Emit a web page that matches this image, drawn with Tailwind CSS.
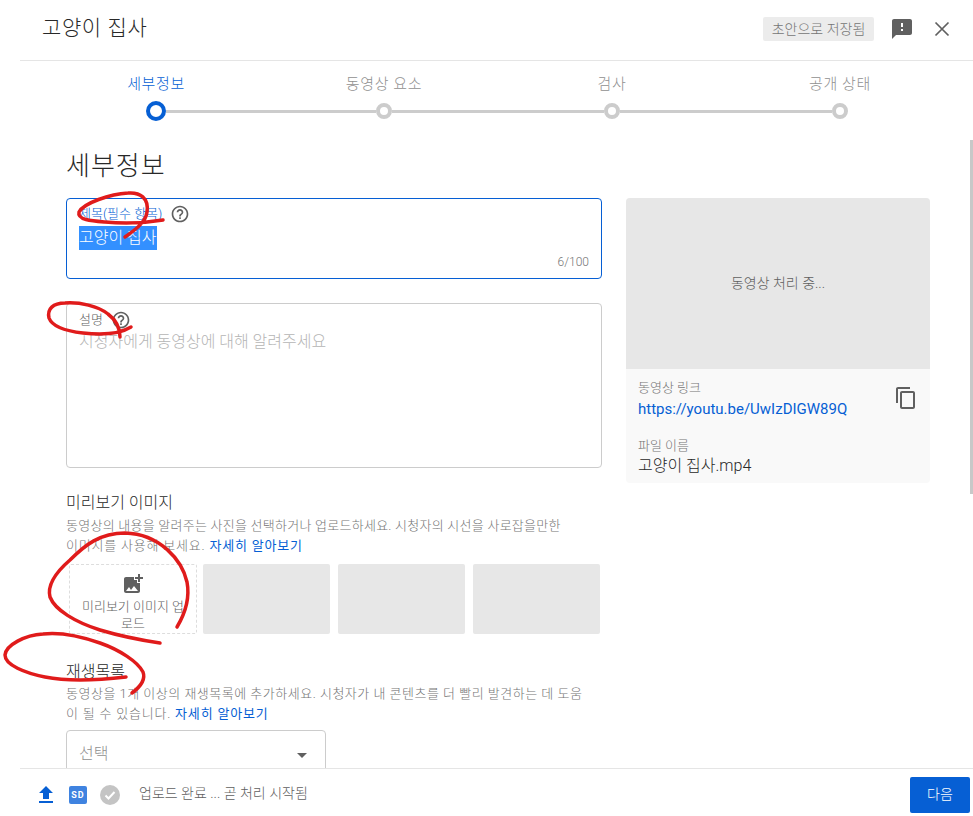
<!DOCTYPE html>
<html lang="ko">
<head>
<meta charset="utf-8">
<script src="https://cdn.jsdelivr.net/npm/@tailwindcss/browser@4"></script>
</head>
<body class="bg-white">
<div class="relative w-[973px] h-[816px] overflow-hidden flex flex-col bg-white text-[#282828] font-light font-['Roboto','Noto_Sans_CJK_KR',sans-serif]">
  <header class="ml-5 h-[61px] shrink-0 border-b border-[#e5e5e5] flex items-center pl-[22px] pr-[19px]">
    <h1 class="flex-1 text-[21px] tracking-[0.600px] leading-[28px] mt-[-4px] font-light">고양이 집사</h1>
    <span class="mt-[-3px] h-[24px] w-[111px] rounded-[2px] bg-[#ececec] text-[#757575] text-[14px] leading-[24px] text-center">초안으로 저장됨</span>
    <svg class="ml-[16px] mt-[-3px] w-[24px] h-[24px]" viewBox="0 0 24 24" fill="#606060"><path d="M20 2H4c-1.100 0-2 .9-2 2v18l4-4h14c1.100 0 2-.9 2-2V4c0-1.100-.9-2-2-2zm-7 12h-2v-2h2v2zm0-4h-2V6h2v4z"/></svg>
    <svg class="ml-[16px] mt-[-3px] w-[24px] h-[24px]" viewBox="0 0 24 24" fill="none" stroke="#606060" stroke-width="1.700"><path d="M5.500 5.500l13 13M18.500 5.500l-13 13"/></svg>
  </header>

  <nav class="ml-[42px] w-[912px] h-[60px] shrink-0 grid grid-cols-4 text-[15px] tracking-[0.600px] text-[#909090] text-center">
    <div class="flex flex-col">
      <span class="h-[40px] leading-[46px] text-[#065fd4]">세부정보</span>
      <div class="flex items-center h-[20px]"><span class="flex-1"></span><span class="w-[20px] h-[20px] rounded-full border-[4px] border-[#065fd4] bg-white"></span><span class="flex-1 h-[3px] bg-[#ccc]"></span></div>
    </div>
    <div class="flex flex-col">
      <span class="h-[40px] leading-[46px]">동영상 요소</span>
      <div class="flex items-center h-[20px]"><span class="flex-1 h-[3px] bg-[#ccc]"></span><span class="w-[16px] h-[16px] rounded-full border-[4px] border-[#ccc] bg-white"></span><span class="flex-1 h-[3px] bg-[#ccc]"></span></div>
    </div>
    <div class="flex flex-col">
      <span class="h-[40px] leading-[46px]">검사</span>
      <div class="flex items-center h-[20px]"><span class="flex-1 h-[3px] bg-[#ccc]"></span><span class="w-[16px] h-[16px] rounded-full border-[4px] border-[#ccc] bg-white"></span><span class="flex-1 h-[3px] bg-[#ccc]"></span></div>
    </div>
    <div class="flex flex-col">
      <span class="h-[40px] leading-[46px]">공개 상태</span>
      <div class="flex items-center h-[20px]"><span class="flex-1 h-[3px] bg-[#ccc]"></span><span class="w-[16px] h-[16px] rounded-full border-[4px] border-[#ccc] bg-white"></span><span class="flex-1"></span></div>
    </div>
  </nav>

  <main class="flex-1 min-h-0 overflow-hidden pl-[66px]">
    <h2 class="mt-[29px] h-[48px] text-[26px] tracking-[1px] leading-[32px] font-light">세부정보</h2>
    <div class="flex gap-6">
      <div class="w-[536px] shrink-0">
        <div class="h-[81px] rounded-[4px] border border-[#065fd4] px-[12px] pt-[5px]">
          <div class="flex items-center h-[20px] gap-[8px]">
            <span class="text-[13px] text-[#065fd4]">제목(필수 항목)</span>
            <svg class="w-[20px] h-[20px]" viewBox="0 0 24 24" fill="#606060"><path d="M11 18h2v-2h-2v2zm1-16C6.480 2 2 6.480 2 12s4.480 10 10 10 10-4.480 10-10S17.520 2 12 2zm0 18c-4.410 0-8-3.590-8-8s3.590-8 8-8 8 3.590 8 8-3.590 8-8 8zm0-14c-2.210 0-4 1.790-4 4h2c0-1.100.9-2 2-2s2 .9 2 2c0 2-3 1.750-3 5h2c0-2.250 3-2.500 3-5 0-2.210-1.790-4-4-4z"/></svg>
          </div>
          <div class="h-[24px] mt-[2px] leading-[24px] text-[16px]"><span class="inline-block h-[24px] bg-[#3390ff] text-white">고양이 집사</span></div>
          <div class="mt-[3px] text-right text-[12px] leading-[18px] text-[#757575]">6/100</div>
        </div>

        <div class="mt-[24px] h-[165px] rounded-[4px] border border-[#ccc] px-[12px] pt-[6px]">
          <div class="flex items-center h-[20px] gap-[8px]">
            <span class="text-[13px] text-[#606060]">설명</span>
            <svg class="w-[20px] h-[20px]" viewBox="0 0 24 24" fill="#606060"><path d="M11 18h2v-2h-2v2zm1-16C6.480 2 2 6.480 2 12s4.480 10 10 10 10-4.480 10-10S17.520 2 12 2zm0 18c-4.410 0-8-3.590-8-8s3.590-8 8-8 8 3.590 8 8-3.590 8-8 8zm0-14c-2.210 0-4 1.790-4 4h2c0-1.100.9-2 2-2s2 .9 2 2c0 2-3 1.750-3 5h2c0-2.250 3-2.500 3-5 0-2.210-1.790-4-4-4z"/></svg>
          </div>
          <div class="text-[16px] leading-[24px] text-[#b5b5b5]">시청자에게 동영상에 대해 알려주세요</div>
        </div>

        <h3 class="mt-[24px] text-[16px] leading-[22px] font-light">미리보기 이미지</h3>
        <p class="mt-[2px] whitespace-nowrap text-[13px] tracking-[0.250px] leading-[20px] text-[#757575]">동영상의 내용을 알려주는 사진을 선택하거나 업로드하세요. 시청자의 시선을 사로잡을만한<br><span class="tracking-[0.800px]">이미지를 사용해 보세요. <a class="font-normal text-[#065fd4]">자세히 알아보기</a></span></p>
        <div class="mt-[8px] flex h-[70px] ml-[3px]">
          <div class="w-[128px] border border-dashed border-[#ddd] rounded-[2px] flex flex-col items-center pt-[7px] text-center text-[13px] leading-[17px] text-[#606060]">
            <svg class="w-[24px] h-[24px] shrink-0 mb-[2px]" viewBox="0 0 24 24" fill="#606060"><path d="M19 7v2.990s-1.990.01-2 0V7h-3s.01-1.990 0-2h3V2h2v3h3v2h-3zm-3 4V8h-3V5H5c-1.100 0-2 .9-2 2v12c0 1.100.9 2 2 2h12c1.100 0 2-.9 2-2v-8h-3zM5 19l3-4 2 3 3-4 4 5H5z"/></svg>
            <span>미리보기 이미지 업<br>로드</span>
          </div>
          <div class="ml-[6px] w-[127px] rounded-[2px] bg-[#e7e7e7]"></div>
          <div class="ml-[8px] w-[127px] rounded-[2px] bg-[#e7e7e7]"></div>
          <div class="ml-[8px] w-[127px] rounded-[2px] bg-[#e7e7e7]"></div>
        </div>

        <h3 class="mt-[27px] text-[16px] leading-[22px] font-light">재생목록</h3>
        <p class="mt-[1px] whitespace-nowrap text-[13px] tracking-[0.500px] leading-[20px] text-[#757575]">동영상을 1개 이상의 재생목록에 추가하세요. 시청자가 내 콘텐츠를 더 빨리 발견하는 데 도움<br><span class="tracking-[0.800px]">이 될 수 있습니다. <a class="font-normal text-[#065fd4]">자세히 알아보기</a></span></p>
        <div class="mt-[6px] w-[260px] h-[60px] rounded-[4px] border border-[#ccc] pl-[12px] pr-[18px] pt-[11px] flex items-start justify-between text-[16px] leading-[24px] text-[#909090]">
          <span>선택</span>
          <span class="mt-[11px] w-0 h-0 border-x-[5px] border-x-transparent border-t-[5px] border-t-[#606060]"></span>
        </div>
      </div>

      <aside class="w-[304px] h-[285px] shrink-0 rounded-[4px] overflow-hidden bg-[#f9f9f9]">
        <div class="h-[171px] bg-[#e7e7e7] flex items-center justify-center text-[14px] text-[#606060]">동영상 처리 중...</div>
        <div class="relative px-[12px] pt-[9px]">
          <div class="text-[13px] leading-[18px] mt-[1px] text-[#757575]">동영상 링크</div>
          <a class="block mt-[2px] font-normal text-[15px] leading-[20px] text-[#065fd4]">https://youtu.be/UwIzDIGW89Q</a>
          <div class="mt-[18px] text-[13px] leading-[18px] text-[#757575]">파일 이름</div>
          <div class="text-[16px] font-light leading-[22px]">고양이 집사.mp4</div>
          <svg class="absolute right-[12px] top-[17px] w-[24px] h-[24px]" viewBox="0 0 24 24" fill="#606060"><path d="M16 1H4c-1.100 0-2 .9-2 2v14h2V3h12V1zm3 4H8c-1.100 0-2 .9-2 2v14c0 1.100.9 2 2 2h11c1.100 0 2-.9 2-2V7c0-1.100-.9-2-2-2zm0 16H8V7h11v14z"/></svg>
        </div>
      </aside>
    </div>
  </main>

  <footer class="ml-5 h-[48px] shrink-0 border-t border-[#e5e5e5] bg-white flex items-center pt-[4px] pl-[14px] pr-[3px]">
    <svg class="w-[24px] h-[24px]" viewBox="0 0 24 24" fill="#065fd4"><path d="M9 16h6v-6h4l-7-7-7 7h4v6zm-4 2h14v2H5v-2z"/></svg>
    <svg class="ml-[11px] w-[18px] h-[18px]" viewBox="0 0 18 18"><rect width="18" height="18" rx="2" fill="#3f83e0"/><text x="9" y="12" text-anchor="middle" font-size="9" font-weight="700" letter-spacing="1" fill="#fff" font-family="Roboto">SD</text></svg>
    <svg class="ml-[12px] w-[22px] h-[22px]" viewBox="0 0 22 22"><circle cx="11" cy="11" r="10" fill="#c4c4c4"/><path d="M6.500 11.500l3 3 6-6.500" fill="none" stroke="#fff" stroke-width="2"/></svg>
    <span class="ml-[18px] mt-[-3px] flex-1 text-[14px] text-[#606060]">업로드 완료 ... 곧 처리 시작됨</span>
    <button class="w-[60px] h-[36px] rounded-[2px] bg-[#065fd4] text-white text-[14px]">다음</button>
  </footer>

  <div class="absolute left-[970px] top-[140px] w-[3px] h-[354px] bg-[#c8c8c8]"></div>

  <svg class="absolute left-0 top-0 w-[973px] h-[816px] pointer-events-none" viewBox="0 0 973 816" fill="none" stroke="#e01b1b" stroke-width="3.500" stroke-linecap="round" stroke-linejoin="round">
    <path d="M125 237 C135 230 146 222 147 212 C149 198 140 192 128 193 C110 194 84 203 79 212 C77 220 92 221 105 222 C125 224 145 223 163 220"/>
    <path d="M120 337 C120 328 116 320 108 314 C98 306 80 302 65 303 C53 303 47 309 49 318 C52 326 65 331 83 333 C100 335 118 335 131 327"/>
    <path d="M177 627 C186 612 190 598 187 582 C182 560 160 534 125 533 C100 533 85 545 70 560 C55 573 47 585 50 597 C55 610 75 622 100 630 C120 636 140 640 160 643"/>
    <path d="M132 693 C140 687 146 680 143 672 C138 662 120 650 100 643 C80 636 60 632 43 634 C25 635 6 645 5 655 C5 665 25 673 45 677 C70 682 100 680 126 677"/>
  </svg>
</div>
</body>
</html>
